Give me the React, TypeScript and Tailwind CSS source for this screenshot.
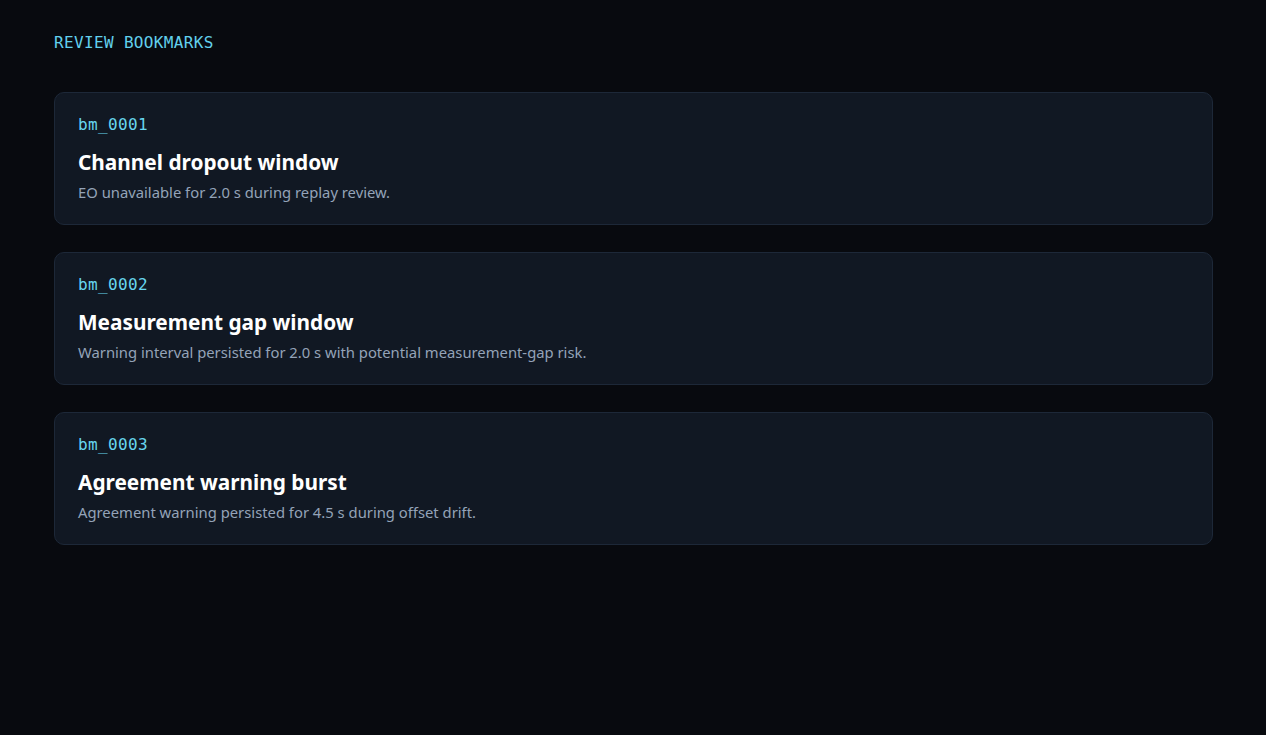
const bookmarks = [
  {
    id: "bm_0001",
    title: "Channel dropout window",
    detail: "EO unavailable for 2.0 s during replay review.",
  },
  {
    id: "bm_0002",
    title: "Measurement gap window",
    detail: "Warning interval persisted for 2.0 s with potential measurement-gap risk.",
  },
  {
    id: "bm_0003",
    title: "Agreement warning burst",
    detail: "Agreement warning persisted for 4.5 s during offset drift.",
  },
];

const mono = "font-['DejaVu_Sans_Mono',monospace]";

export default function App() {
  return (
    <div className="min-h-screen bg-[#080a0f] pl-[54px] pr-[53px] pt-[33px] font-['Noto_Sans',sans-serif]">
      <h1 className={`${mono} text-[16px] leading-[20px] tracking-[0.35px] text-[#62d0ec]`}>
        REVIEW BOOKMARKS
      </h1>
      <div className="mt-[39px] flex flex-col gap-[27px]">
        {bookmarks.map((b) => (
          <div
            key={b.id}
            className="rounded-[10px] border border-[#1d2838] bg-[#111823] px-[23px] pt-[22px] pb-[21px]"
          >
            <div className={`${mono} text-[16px] leading-[20px] tracking-[0.35px] text-[#67d6ef]`}>
              {b.id}
            </div>
            <div className="mt-[13px] text-[20.8px] font-bold leading-[28px] text-white">
              {b.title}
            </div>
            <div className="mt-[5px] text-[14.8px] leading-[22px] text-[#94a3b8]">{b.detail}</div>
          </div>
        ))}
      </div>
    </div>
  );
}
